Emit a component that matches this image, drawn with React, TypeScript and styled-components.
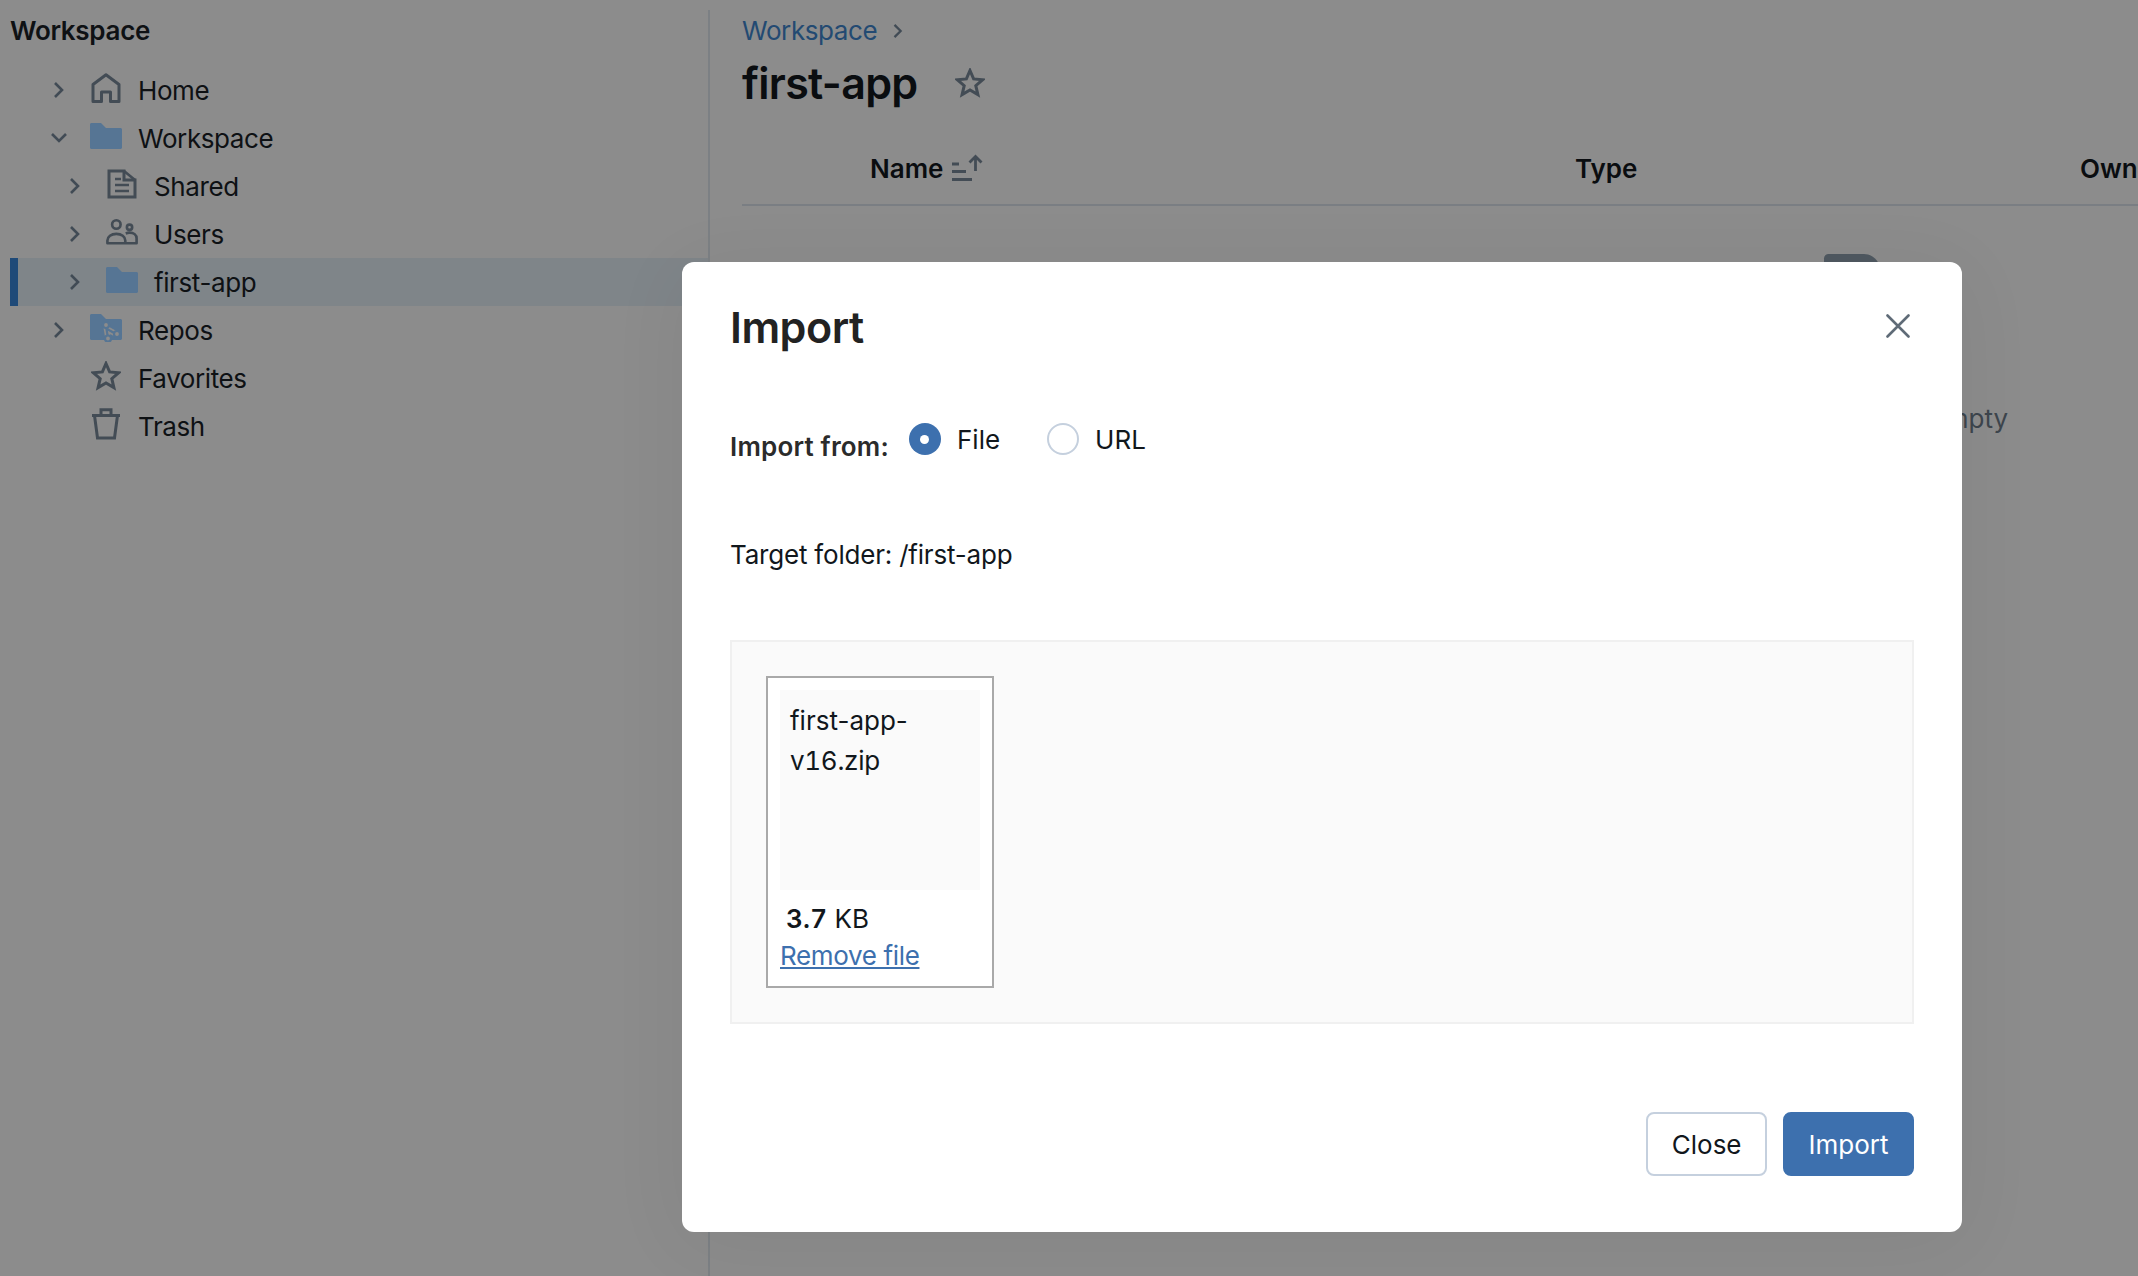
import React from 'react'
import styled, { createGlobalStyle } from 'styled-components'

const GlobalStyle = createGlobalStyle`
  html, body {
    margin: 0;
    padding: 0;
    background: #8c8c8c;
  }
  * {
    box-sizing: border-box;
  }
  body {
    font-family: Inter, "Noto Sans", sans-serif;
    font-size: 26px;
    color: #0e1114;
  }
`

const Page = styled.div`
  position: relative;
  display: flex;
  width: 2138px;
  height: 1276px;
  padding: 10px 0 0 10px;
  overflow: hidden;
  background: #8c8c8c;
`

const Sidebar = styled.aside`
  flex: 0 0 700px;
  border-right: 2px solid #7c8084;
`

const SidebarTitle = styled.div`
  height: 56px;
  padding: 1px 0 15px 0;
  line-height: 40px;
  font-weight: 600;
  letter-spacing: -0.3px;
`

const TreeRow = styled.div<{ $depth?: number; $selected?: boolean }>`
  display: flex;
  align-items: center;
  height: 48px;
  padding-left: ${(p) => 41 + (p.$depth ?? 0) * 16}px;
  letter-spacing: -0.4px;
  background: ${(p) => (p.$selected ? '#7f8589' : 'transparent')};
  box-shadow: ${(p) => (p.$selected ? 'inset 8px 0 0 #1f4a78' : 'none')};
`

const Twist = styled.span`
  display: flex;
  justify-content: center;
  flex: 0 0 16px;
  margin-right: 23px;
  color: #414b55;
`

const TreeIcon = styled.span`
  display: flex;
  justify-content: center;
  flex: 0 0 32px;
  min-width: 0;
  margin: 0 16px 4px 0;
  color: #434c55;
`

const Main = styled.main`
  flex: 1;
  min-width: 0;
  padding-left: 32px;
`

const Crumbs = styled.div`
  display: flex;
  align-items: center;
  gap: 14px;
  height: 40px;
  letter-spacing: -0.4px;
  color: #234a72;
  svg {
    color: #414b55;
    margin-top: 2px;
  }
`

const TitleRow = styled.div`
  display: flex;
  align-items: center;
  gap: 38px;
  height: 66px;
`

const Title = styled.h1`
  margin: 0;
  font-size: 43px;
  font-weight: 600;
  letter-spacing: -0.7px;
  color: #0a0d10;
`

const FavoriteMark = styled.span`
  display: flex;
  color: #434c55;
`

const Table = styled.div`
  width: 2289px;
`

const HeadRow = styled.div`
  display: grid;
  grid-template-columns: 128px 705px 505px auto;
  align-items: center;
  height: 90px;
  padding-top: 16px;
  border-bottom: 2px solid #7a7e83;
  font-weight: 600;
  color: #0a0d10;
`

const HeadCell = styled.div`
  display: flex;
  align-items: center;
  gap: 8px;
`

const EmptyState = styled.div`
  display: flex;
  flex-direction: column;
  align-items: center;
  padding-top: 48px;
  color: #3d454d;
`

const EmptyFolder = styled.div`
  width: 125px;
  height: 96px;
  margin-bottom: 53px;
  &::before {
    content: '';
    display: block;
    width: 56px;
    height: 16px;
    border-radius: 8px 28px 0 0;
    background: #4f5860;
  }
`

const Modal = styled.div`
  position: absolute;
  left: 682px;
  top: 262px;
  width: 1280px;
  height: 970px;
  padding: 41px 48px 0;
  border-radius: 12px;
  background: #fff;
  box-shadow: 0 10px 80px rgba(0, 0, 0, 0.06);
`

const ModalHead = styled.div`
  display: flex;
  align-items: center;
  justify-content: space-between;
  height: 48px;
  color: #5f6b77;
`

const ModalTitle = styled.h2`
  margin: 0;
  font-size: 43px;
  font-weight: 600;
  letter-spacing: -0.5px;
  color: #222;
`

const CloseButton = styled.button`
  display: flex;
  margin: 0 4px 2px 0;
  padding: 0;
  border: 0;
  background: none;
  color: inherit;
`

const SourceRow = styled.div`
  display: flex;
  align-items: flex-start;
  margin-top: 72px;
`

const SourceLabel = styled.span`
  margin: 6px 20px 0 0;
  line-height: 36px;
  font-weight: 600;
  letter-spacing: 0.2px;
  color: #2b2b2b;
`

const RadioOption = styled.label`
  display: flex;
  align-items: center;
  gap: 16px;
  height: 32px;
  margin-right: 47px;
  color: #11171c;
`

const RadioMark = styled.span<{ $checked?: boolean }>`
  display: flex;
  align-items: center;
  justify-content: center;
  width: 32px;
  height: 32px;
  border-radius: 50%;
  border: ${(p) => (p.$checked ? '0' : '2px solid #c5d0de')};
  background: ${(p) => (p.$checked ? '#3d70ae' : '#fff')};
  &::after {
    content: '';
    display: ${(p) => (p.$checked ? 'block' : 'none')};
    width: 9px;
    height: 9px;
    border-radius: 50%;
    background: #fff;
  }
`

const TargetFolder = styled.div`
  margin-top: 72px;
  line-height: 36px;
  letter-spacing: -0.2px;
  color: #11171c;
`

const DropZone = styled.div`
  height: 384px;
  margin-top: 67px;
  padding: 34px;
  border: 2px solid #f0f0f0;
  background: #fafafa;
`

const FileCard = styled.div`
  width: 228px;
  height: 312px;
  padding: 12px 12px 0;
  border: 2px solid #a9a9a9;
  background: #fff;
  color: #11171c;
`

const Thumb = styled.div`
  width: 200px;
  height: 200px;
  padding: 11px 10px;
  background: #fafafa;
  line-height: 40px;
`

const FileTail = styled.span`
  letter-spacing: -0.3px;
  font-variant-numeric: tabular-nums;
`

const FileSize = styled.div`
  margin-top: 11px;
  padding-left: 6px;
  line-height: 36px;
  letter-spacing: 0.2px;
  font-variant-numeric: tabular-nums;
  b {
    font-weight: 600;
  }
`

const RemoveLink = styled.a`
  display: block;
  line-height: 37px;
  letter-spacing: -0.35px;
  color: #3d70ae;
  text-decoration: underline;
`

const Footer = styled.div`
  display: flex;
  justify-content: flex-end;
  gap: 16px;
  margin-top: 88px;
`

const Button = styled.button<{ $primary?: boolean }>`
  height: 64px;
  padding: 0 23.5px;
  border: 2px solid ${(p) => (p.$primary ? '#3d70ae' : '#c5d0de')};
  border-radius: 8px;
  background: ${(p) => (p.$primary ? '#3d70ae' : '#fff')};
  color: ${(p) => (p.$primary ? '#fff' : '#11171c')};
  font: inherit;
`

function Chevron({ dir = 'right', size = 16 }: { dir?: 'right' | 'down'; size?: number }) {
  return (
    <svg width={size} height={size} viewBox="0 0 16 16" fill="none" stroke="currentColor" strokeWidth="2.6">
      {dir === 'right' ? <path d="M4 1l7 7-7 7" /> : <path d="M1 4l7 7 7-7" />}
    </svg>
  )
}

function HomeIcon() {
  return (
    <svg width="30" height="30" viewBox="0 0 30 30" fill="none" stroke="currentColor" strokeWidth="3">
      <path d="M2 28.500V11.500L15 1.800l13 9.700v17h-8.500v-9.500h-9v9.500z" strokeLinejoin="round" />
    </svg>
  )
}

function FolderIcon() {
  return (
    <svg width="32" height="26" viewBox="0 0 32 26" fill="#567594">
      <path d="M0 1.500C0 .7.700 0 1.500 0H11l5 5h14.500c.8 0 1.500.7 1.500 1.500v18c0 .8-.7 1.500-1.500 1.500h-29C.7 26 0 25.300 0 24.500z" />
    </svg>
  )
}

function SharedIcon() {
  return (
    <svg width="30" height="30" viewBox="0 0 30 30" fill="none" stroke="currentColor" strokeWidth="3">
      <path d="M2 2h15v9h11v17H2z" />
      <path d="M17 2l11 9M8 10h6M8 16h14M8 22h14" strokeWidth="2.600" />
    </svg>
  )
}

function UsersIcon() {
  return (
    <svg width="34" height="28" viewBox="0 0 34 28" fill="none" stroke="currentColor" strokeWidth="2.800">
      <circle cx="11" cy="6" r="4.500" />
      <circle cx="25" cy="9" r="2.800" />
      <path d="M1.500 26v-3c0-4 4-7 9.500-7s9.500 3 9.500 7v3zM21 15.500c1.200-.5 2.500-.8 4-.8 4.500 0 7.500 2.700 7.500 6V26H20.500" strokeLinejoin="round" />
    </svg>
  )
}

function RepoIcon() {
  return (
    <svg width="32" height="28" viewBox="0 0 32 28">
      <path fill="#567594" d="M0 1.500C0 .7.700 0 1.500 0H11l5 5h14.500c.8 0 1.500.7 1.500 1.500v18c0 .8-.7 1.500-1.500 1.500h-29C.7 26 0 25.300 0 24.500z" />
      <g fill="#8c8c8c" stroke="#567594" strokeWidth="2.200">
        <path d="M16 12l2 12M17 15l9 5" fill="none" stroke="#8c8c8c" strokeWidth="5.500" />
        <path d="M16 12l2 12M17 15l9 5" fill="none" />
        <circle cx="16" cy="11" r="3" />
        <circle cx="18" cy="24.500" r="3" />
        <circle cx="27" cy="20" r="3" />
      </g>
    </svg>
  )
}

function StarIcon({ size = 30 }: { size?: number }) {
  return (
    <svg width={size} height={size} viewBox="0 0 30 30" fill="none" stroke="currentColor" strokeWidth="3" strokeLinejoin="miter">
      <path d="M15 2.500l3.600 8.400 9.100.8-6.900 6 2.100 8.900-7.900-4.700-7.900 4.700 2.100-8.900-6.900-6 9.100-.8z" />
    </svg>
  )
}

function TrashIcon() {
  return (
    <svg width="30" height="32" viewBox="0 0 30 32" fill="none" stroke="currentColor" strokeWidth="3">
      <path d="M1 7.500h28M10 7.500V1.800h10v5.700M3.500 7.500L6.500 30h17l3-22.500" />
    </svg>
  )
}

function SortIcon() {
  return (
    <svg width="32" height="28" viewBox="0 0 32 28" fill="none" stroke="#434c55" strokeWidth="2.800">
      <path d="M1 10h7M1 17.500h14M1 25.500h20M24.500 17V2.500M18.500 8.500l6-6 6 6" />
    </svg>
  )
}

function CloseIcon() {
  return (
    <svg width="24" height="24" viewBox="0 0 24 24" fill="none" stroke="currentColor" strokeWidth="2.600" strokeLinecap="round">
      <path d="M1.500 1.500l21 21M22.500 1.500l-21 21" />
    </svg>
  )
}

type TreeItem = {
  label: string
  icon: React.ReactNode
  depth?: number
  twist?: 'right' | 'down'
  selected?: boolean
}

const tree: TreeItem[] = [
  { label: 'Home', icon: <HomeIcon />, twist: 'right' },
  { label: 'Workspace', icon: <FolderIcon />, twist: 'down' },
  { label: 'Shared', icon: <SharedIcon />, depth: 1, twist: 'right' },
  { label: 'Users', icon: <UsersIcon />, depth: 1, twist: 'right' },
  { label: 'first-app', icon: <FolderIcon />, depth: 1, twist: 'right', selected: true },
  { label: 'Repos', icon: <RepoIcon />, twist: 'right' },
  { label: 'Favorites', icon: <StarIcon /> },
  { label: 'Trash', icon: <TrashIcon /> },
]

export default function App() {
  return (
    <>
      <GlobalStyle />
      <Page>
        <Sidebar>
          <SidebarTitle>Workspace</SidebarTitle>
          {tree.map((item) => (
            <TreeRow key={item.label} $depth={item.depth} $selected={item.selected}>
              <Twist>{item.twist && <Chevron dir={item.twist} />}</Twist>
              <TreeIcon>{item.icon}</TreeIcon>
              {item.label}
            </TreeRow>
          ))}
        </Sidebar>
        <Main>
          <Crumbs>
            Workspace
            <Chevron size={14} />
          </Crumbs>
          <TitleRow>
            <Title>first-app</Title>
            <FavoriteMark>
              <StarIcon />
            </FavoriteMark>
          </TitleRow>
          <Table>
            <HeadRow>
              <span />
              <HeadCell>
                Name <SortIcon />
              </HeadCell>
              <HeadCell>Type</HeadCell>
              <HeadCell>Owner</HeadCell>
            </HeadRow>
            <EmptyState>
              <EmptyFolder />
              This folder is empty
            </EmptyState>
          </Table>
        </Main>
        <Modal>
          <ModalHead>
            <ModalTitle>Import</ModalTitle>
            <CloseButton>
              <CloseIcon />
            </CloseButton>
          </ModalHead>
          <SourceRow>
            <SourceLabel>Import from:</SourceLabel>
            <RadioOption>
              <RadioMark $checked />
              File
            </RadioOption>
            <RadioOption>
              <RadioMark />
              URL
            </RadioOption>
          </SourceRow>
          <TargetFolder>Target folder: /first-app</TargetFolder>
          <DropZone>
            <FileCard>
              <Thumb>
                first-app-<FileTail>v16.zip</FileTail>
              </Thumb>
              <FileSize>
                <b>3.7</b> KB
              </FileSize>
              <RemoveLink>Remove file</RemoveLink>
            </FileCard>
          </DropZone>
          <Footer>
            <Button>Close</Button>
            <Button $primary>Import</Button>
          </Footer>
        </Modal>
      </Page>
    </>
  )
}
